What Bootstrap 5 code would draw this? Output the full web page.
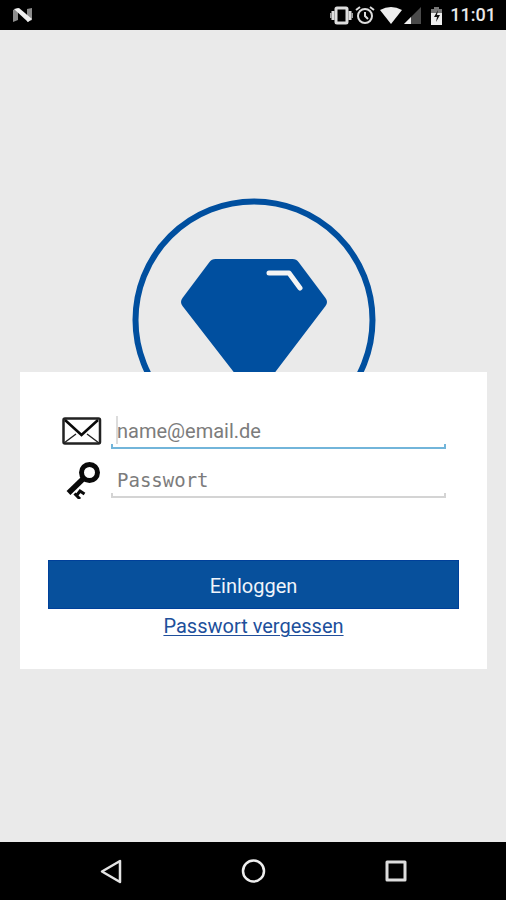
<!DOCTYPE html>
<html lang="de">
<head>
<meta charset="utf-8">
<meta name="viewport" content="width=device-width, initial-scale=1">
<title>Einloggen</title>
<link href="https://cdn.jsdelivr.net/npm/bootstrap@5.3.0/dist/css/bootstrap.min.css" rel="stylesheet">
<style>
  body { font-family: Roboto, "Liberation Sans", sans-serif; background: #eaeaea; }
  .status-bar { height: 30px; padding: 0 10px 0 12px; color: #e8e8e8; font-size: 18px; line-height: 30px; font-weight: 500; }
  .stage { padding: 168px 19px 20px 20px; }
  .brand-logo { width: 244px; height: 174px; }
  .login-panel { padding: 36px 28px 29px; }
  .field-list { padding: 0 13px; }
  .field-row { height: 49px; }
  .field-icon { width: 42px; height: 42px; }
  .line-input {
    --line: #d4d4d4;
    --caret: transparent;
    height: 41px;
    padding: 5px 6px 0;
    border: 0;
    border-radius: 0;
    outline: 0;
    font-size: 20px;
    color: #333;
    background:
      linear-gradient(var(--line), var(--line)) left bottom / 100% 2px no-repeat,
      linear-gradient(var(--line), var(--line)) left bottom / 2px 5px no-repeat,
      linear-gradient(var(--line), var(--line)) right bottom / 2px 5px no-repeat,
      linear-gradient(var(--caret), var(--caret)) 5px 8px / 2px 28px no-repeat;
  }
  .line-input.is-active { --line: #72b5da; --caret: #dcdcdc; }
  .line-input::placeholder { color: #7c7c7c; opacity: 1; }
  .line-input.mono { font-family: "DejaVu Sans Mono", monospace; font-size: 19px; }
  .login-btn { margin-top: 54px; height: 49px; padding: 8px 12px 6px; border: 1px solid #00409a; background: #07509c; color: #f0f4fa; font-size: 20px; line-height: 30px; }
  .forgot-link { margin-top: 3px; color: #204f9b; font-size: 20px; line-height: 28px; text-decoration-thickness: 1px; text-underline-offset: 2px; }
  .system-nav { height: 58px; padding: 0 40px; }
  .system-nav button { width: 142px; }
</style>
<script src="https://cdn.jsdelivr.net/npm/bootstrap@5.3.0/dist/js/bootstrap.bundle.min.js"></script>
</head>
<body class="d-flex flex-column min-vh-100">

<header class="status-bar bg-black d-flex align-items-center justify-content-between">
  <svg width="22" height="20" viewBox="0 0 22 20" aria-hidden="true">
    <path d="M1 5l5-2v12l-5 2zM15 4l5-1v12l-5 2z" fill="#8c8c8c"/>
    <path d="M2 4l5-1 13 11-4 3z" fill="#f0f0f0"/>
  </svg>
  <div class="d-flex align-items-center">
    <svg width="24" height="20" viewBox="0 0 24 20" aria-hidden="true" fill="none" stroke="#ddd">
      <rect x="6" y="3" width="11" height="15" rx="1" stroke-width="3"/>
      <path d="M3 6v9M20 6v9" stroke-width="3"/>
      <path d="M0.800 8v5M22.200 8v5" stroke-width="1.500" stroke="#aaa"/>
    </svg>
    <svg width="22" height="20" viewBox="0 0 22 20" aria-hidden="true" fill="none" stroke="#ddd" stroke-width="2">
      <circle cx="11" cy="11" r="7"/>
      <path d="M11 7v4l3 3M2 5l4-3M20 5l-4-3"/>
    </svg>
    <svg class="ms-1" width="46" height="20" viewBox="0 0 46 20" aria-hidden="true">
      <path d="M0 5Q11-1 22 5L11 19z" fill="#eee"/>
      <path d="M41 2v17H24z" fill="#4a4a4a"/>
      <path d="M31 12V19h-7z" fill="#f0f0f0"/>
    </svg>
    <svg class="ms-1" width="16" height="20" viewBox="0 0 16 20" aria-hidden="true">
      <path d="M1 4h3V2h5v2h3v4H1z" fill="#777"/>
      <path d="M1 8h11v12H1z" fill="#eee"/>
      <path d="M8 5l-4 7h3l-1 5 4-7H7z" fill="#111"/>
    </svg>
    <span class="ms-1">11:01</span>
  </div>
</header>

<main class="stage flex-grow-1">
  <svg class="brand-logo d-block mx-auto" viewBox="0 0 244 174" role="img" aria-label="Diamant">
    <circle cx="122" cy="122" r="118.500" fill="none" stroke="#004f9f" stroke-width="6"/>
    <path d="M83.500 61H160.500Q164.500 61 166.500 64L193.500 100Q196.500 104 193.500 108L141 177H104L50.500 108Q47.500 104 50.500 100L77.500 64Q79.500 61 83.500 61Z" fill="#004f9f"/>
    <path d="M137 75H157L168 90" fill="none" stroke="#f4f4f4" stroke-width="5" stroke-linecap="round" stroke-linejoin="round"/>
  </svg>

  <form class="login-panel bg-white">
    <div class="field-list">
      <div class="field-row d-flex align-items-start gap-2">
        <label for="email" class="flex-shrink-0" aria-label="E-Mail">
          <svg class="field-icon d-block" viewBox="0 0 42 42" aria-hidden="true" fill="none" stroke="#222">
            <rect x="2.500" y="10.500" width="36.500" height="25" rx="1.500" stroke-width="2.500"/>
            <path d="M4 12L20.500 27 37 12" stroke="#0a0a0a" stroke-width="2.600"/>
            <path d="M3 35l12-9M38 35l-12-9" stroke-width="1.400"/>
          </svg>
        </label>
        <input id="email" type="email" class="line-input is-active flex-grow-1 w-100" placeholder="name@email.de">
      </div>
      <div class="field-row d-flex align-items-start gap-2">
        <label for="password" class="flex-shrink-0" aria-label="Passwort">
          <svg class="field-icon d-block" viewBox="0 0 42 42" aria-hidden="true" fill="none" stroke="#0a0a0a">
            <circle cx="28.500" cy="15.500" r="8" stroke-width="5"/>
            <path d="M23 21L7.500 36" stroke-width="5.500"/>
            <path d="M13.500 36.500l5.500 5.500M15.500 38.500l3.500-4.500 4.500 3" stroke-width="3"/>
          </svg>
        </label>
        <input id="password" type="password" class="line-input mono flex-grow-1 w-100" placeholder="Passwort">
      </div>
    </div>
    <button type="submit" class="login-btn btn rounded-0 w-100 d-block">Einloggen</button>
    <div class="text-center"><a href="#" class="forgot-link d-inline-block">Passwort vergessen</a></div>
  </form>
</main>

<nav class="system-nav bg-black d-flex align-items-center justify-content-between" aria-label="System">
  <button type="button" class="btn p-0 border-0" aria-label="Zurück">
    <svg width="26" height="26" viewBox="0 0 26 26" fill="none" stroke="#e4e4e4" stroke-width="2.500" stroke-linejoin="round"><path d="M22 3v21L4 13.500z"/></svg>
  </button>
  <button type="button" class="btn p-0 border-0" aria-label="Startseite">
    <svg width="26" height="26" viewBox="0 0 26 26" fill="none" stroke="#eee" stroke-width="2.500"><circle cx="13.500" cy="13" r="10.500"/></svg>
  </button>
  <button type="button" class="btn p-0 border-0" aria-label="Übersicht">
    <svg width="26" height="26" viewBox="0 0 26 26" fill="none" stroke="#ddd" stroke-width="3" stroke-linejoin="round"><rect x="5" y="4" width="18" height="18"/></svg>
  </button>
</nav>
</body>
</html>
